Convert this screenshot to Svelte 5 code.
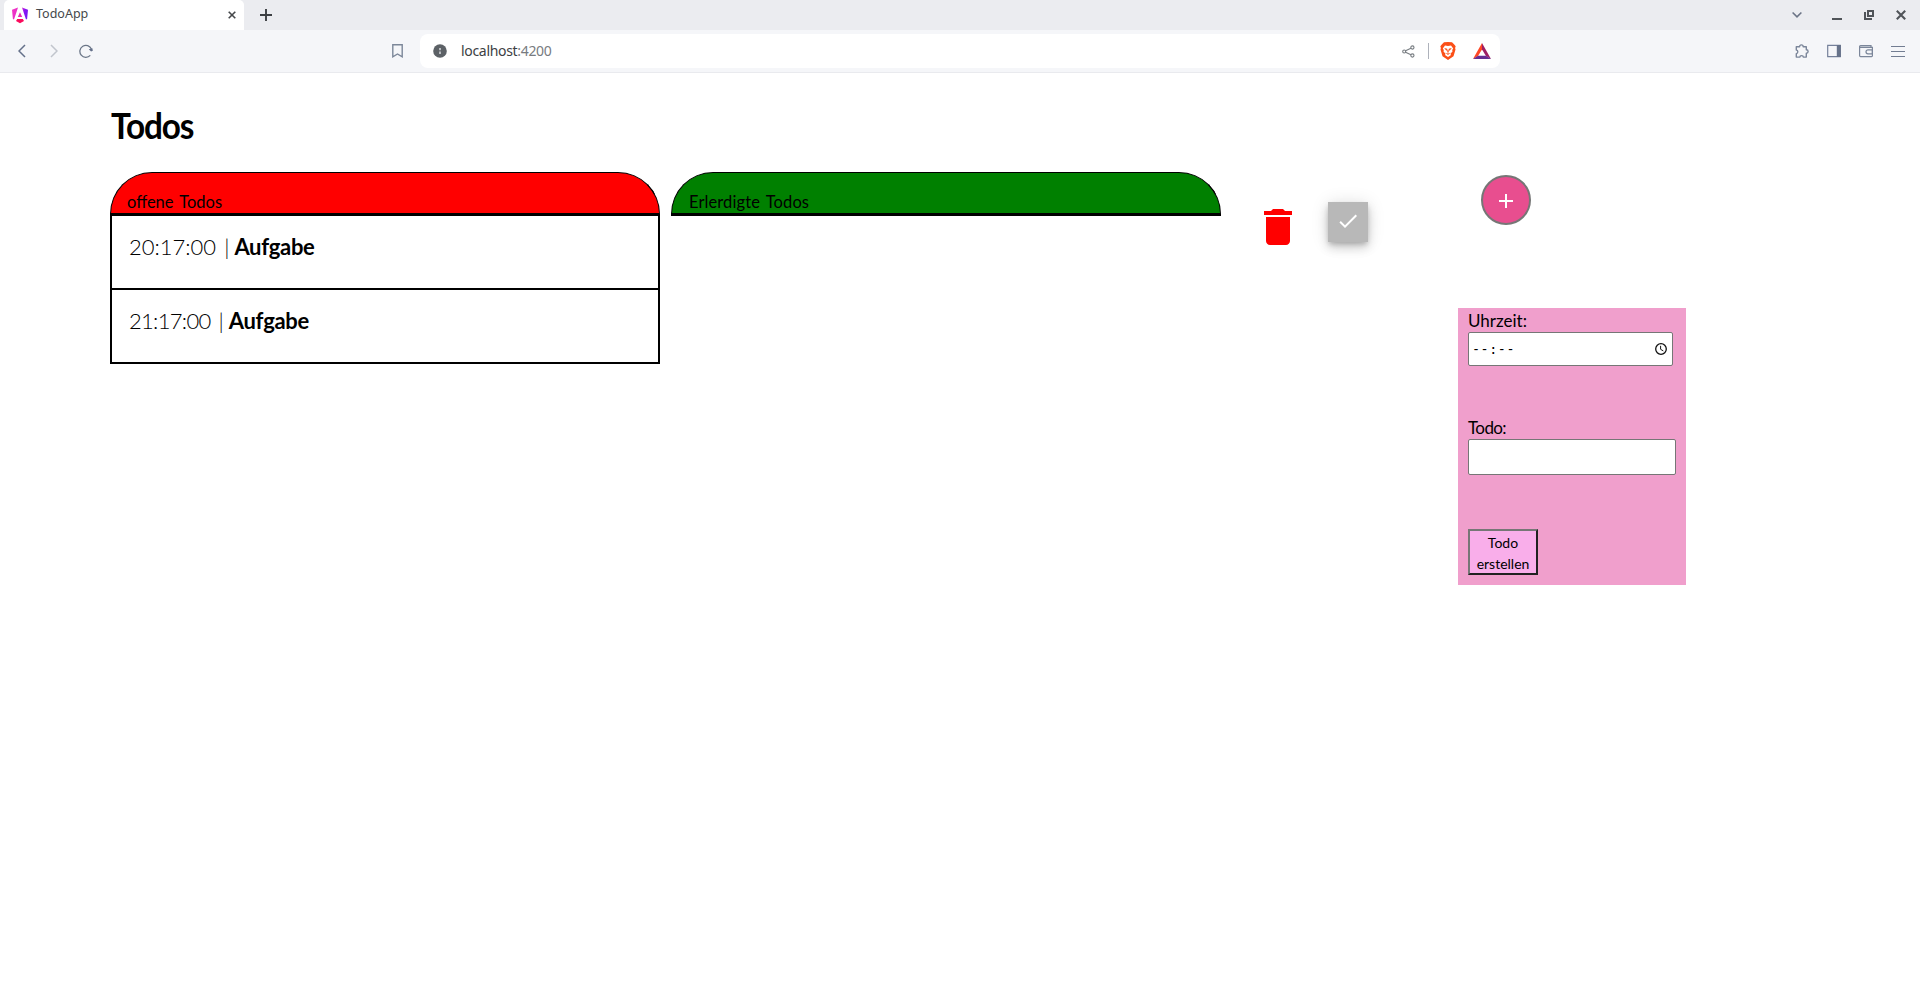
<script>
  const todos = [
    { time: '20:17:00', title: 'Aufgabe', tracking: 0 },
    { time: '21:17:00', title: 'Aufgabe', tracking: -0.7 }
  ];
</script>

<div class="browser">
  <div class="tabs">
    <div class="tab">
      <svg class="logo" width="16" height="17" viewBox="0 0 16 17">
        <defs>
          <linearGradient id="ng" x1="0" y1="0" x2="1" y2="0.3">
            <stop offset="0" stop-color="#f637c5" />
            <stop offset="0.55" stop-color="#e22cc8" />
            <stop offset="0.8" stop-color="#8a14f5" />
            <stop offset="1" stop-color="#7b17f3" />
          </linearGradient>
        </defs>
        <path d="M6 .5 0 2.8l.9 9.2 1.1.6zM10 .5l6 2.3-.9 9.2-1.1.6z" fill="url(#ng)" />
        <path d="M8 5.3 5.8 10h4.4z" fill="#e62bb2" />
        <path d="M5.2 12h5.6l1.2 2L8 16.3 4 14z" fill="#fb0b5c" />
      </svg>
      <span class="tab-title">TodoApp</span>
      <svg class="tab-close" width="8" height="8" viewBox="0 0 8 8"><path d="m.7.7 6.6 6.6M7.3.7.7 7.3" stroke="#45484b" stroke-width="1.6" /></svg>
    </div>
    <svg class="new-tab" width="12" height="12" viewBox="0 0 12 12"><path d="M6 0v12M0 6h12" stroke="#3c3f43" stroke-width="1.9" /></svg>
    <div class="window-buttons">
      <svg width="10" height="10" viewBox="0 0 10 10" fill="none" stroke="#6b7486" stroke-width="1.6"><path d="m.6 2.5 4.4 4.3 4.4-4.3" /></svg>
      <svg width="10" height="10" viewBox="0 0 10 10"><path d="M0 8h10v2H0z" fill="#505459" /></svg>
      <svg width="10" height="10" viewBox="0 0 10 10" fill="none" stroke="#505459" stroke-width="2"><path d="M4 1h5v5H4zM1 2v7h7" /></svg>
      <svg width="10" height="10" viewBox="0 0 10 10"><path d="m.8.8 8.4 8.4M9.2.8.8 9.2" stroke="#505459" stroke-width="2.1" /></svg>
    </div>
  </div>
  <div class="toolbar">
    <div class="nav">
      <svg width="8" height="14" viewBox="0 0 8 14" fill="none" stroke="#64708a" stroke-width="1.5"><path d="M7 1 1 7l6 6" /></svg>
      <svg width="8" height="14" viewBox="0 0 8 14" fill="none" stroke="#c1c5cd" stroke-width="1.5"><path d="m1 1 6 6-6 6" /></svg>
      <svg width="14" height="14" viewBox="0 0 14 14" fill="none" stroke="#6b7688" stroke-width="1.3"><path d="M11.3 11.4A6 6 0 1 1 12.4 5" /><path d="m9.8 5.2 3.6-1 .4 2.5-1.7.8z" fill="#64708a" stroke="none" /></svg>
    </div>
    <svg class="bookmark" width="11" height="14" viewBox="0 0 11 14" fill="none" stroke="#7c8799" stroke-width="1.4"><path d="M.8.8h9.4v12L5.5 10 .8 12.8z" /></svg>
    <div class="address">
      <svg width="14" height="14" viewBox="0 0 14 14"><circle cx="7" cy="7" r="6.8" fill="#5c6166" /><path d="M6 4h2v2.3H6zM6 7.5h2v2.4H6z" fill="#b9bcbf" /></svg>
      <span class="url">localhost<span>:4200</span></span>
      <div class="address-icons">
        <svg width="13" height="13" viewBox="0 0 13 13" fill="none" stroke="#777c81" stroke-width="1.1"><circle cx="2.2" cy="6.5" r="1.5" /><circle cx="10.4" cy="2.5" r="1.6" /><circle cx="10.4" cy="10.5" r="1.6" /><path d="m3.6 5.8 5.3-2.5M3.6 7.2l5.3 2.5" /></svg>
        <i></i>
        <svg width="16" height="18" viewBox="0 0 16 18"><path d="m4 .3 4-.2 4 .2 2 2 1.7 2-.6 1.6.4 1.7-2 6.6L8 17.9l-5.5-3.7-2-6.6.4-1.7-.6-1.6L2 2.3z" fill="#fb4f17" /><path d="m5 3.6 3 .5 3-.5 2.2 2.8-1 1.7.3 1.4-2.1 2.2L11 13l-3 2-3-2 .6-1.3-2.1-2.2.3-1.4-1-1.7z" fill="#fff" /><path d="m4.2 6 3 .8-.6 2.2zM11.8 6l-3 .8.6 2.2zM7.3 7.5h1.4v2.9H7.3zM5.5 10.8l2.5.8 2.5-.8L8 13.1z" fill="#fb4f17" /></svg>
        <svg class="bat" width="18" height="16" viewBox="0 0 18 16"><path d="M9 0 0 16l5-3 4-6.5z" fill="#ff4724" /><path d="m9 0 9 16-5-3-4-6.5z" fill="#9e1f63" /><path d="M0 16h18l-5-3.2H5z" fill="#662d91" /></svg>
      </div>
    </div>
    <div class="tools">
      <svg width="14" height="14" viewBox="0 0 14 14" fill="none" stroke="#7b869a" stroke-width="1.4" stroke-linejoin="round"><path d="M1.3 2.7h3.3c0-2.4 3.6-2.4 3.6 0h3.1v3.1c2.4 0 2.4 3.5 0 3.5v3.8H8.3c0-2-3.4-2-3.4 0H1.3V9.6c2 0 2-3.5 0-3.5z" /></svg>
      <svg width="14" height="14" viewBox="0 0 14 14"><path d="M.7 1.4h12.6v11.3H.7z" fill="none" stroke="#75809a" stroke-width="1.2" /><path d="M9.8 1H13.8v12H9.8z" fill="#66728a" /></svg>
      <svg width="14" height="14" viewBox="0 0 14 14" fill="none" stroke="#7b869a" stroke-width="1.2"><path d="M12 3V1.6H1.6q-1 0-1 1v9q0 1 1 1h11q.8 0 .8-.8V3.3H1" /><path d="M13.4 5.8H9a2 2 0 0 0 0 4h4.4z" /></svg>
      <svg width="14" height="14" viewBox="0 0 14 14" stroke="#727d92" stroke-width="1.2"><path d="M0 2.5h14M0 7.5h14M0 12.5h14" /></svg>
    </div>
  </div>
</div>

<main>
  <h1><span>Todos</span></h1>
  <div class="content">
    <section class="column">
      <header class="open"><span>offene Todos</span></header>
      <div class="list">
        {#each todos as todo}
          <div class="row"><span class="time" style="letter-spacing: {todo.tracking}px">{todo.time}</span><span class="bar">|</span><b>{todo.title}</b></div>
        {/each}
      </div>
    </section>
    <section class="column">
      <header class="done"><span>Erlerdigte Todos</span></header>
      <div class="list"></div>
    </section>
    <svg class="trash" width="48" height="48" viewBox="0 0 24 24" fill="red"><path d="M6 19c0 1.1.9 2 2 2h8c1.1 0 2-.9 2-2V7H6v12zM19 4h-3.5l-1-1h-5l-1 1H5v2h14V4z" /></svg>
    <button class="check" aria-label="Erledigt"><svg width="24" height="24" viewBox="0 0 24 24" fill="#fff"><path d="M9 16.17 4.83 12l-1.42 1.41L9 19 21 7l-1.41-1.41z" /></svg></button>
    <aside>
      <button class="add" aria-label="Hinzufügen"><svg width="24" height="24" viewBox="0 0 24 24" fill="#fff"><path d="M19 13h-6v6h-2v-6H5v-2h6V5h2v6h6v2z" /></svg></button>
      <div class="form">
        <div class="label uhr">Uhrzeit:</div>
        <div class="time-input">
          <span>--:--</span>
          <svg width="12" height="12" viewBox="0 0 12 12" fill="none" stroke="#111" stroke-width="1.3"><circle cx="6" cy="6" r="5.3" /><path d="M5.6 2.8v3.5l2.7 1.6" stroke-width="1" /></svg>
        </div>
        <div class="label todo">Todo:</div>
        <div class="text-input"></div>
        <button class="create"><span>Todo</span><span>erstellen</span></button>
      </div>
    </aside>
  </div>
</main>

<style>
  :global(body) { margin: 0; background: #fff; overflow: hidden; }
  svg { display: block; flex: none; }
  button { margin: 0; padding: 0; font: inherit; }
  .browser { font-family: "Noto Sans", "Open Sans", sans-serif; }
  .tabs { height: 30px; background: #ebecf0; display: flex; align-items: center; padding-left: 4px; }
  .tab { box-sizing: border-box; width: 240px; height: 30px; background: #fff; border-radius: 5px 5px 0 0; display: flex; align-items: center; padding: 0 8px; }
  .tab-title { margin-left: 8px; font-size: 12.5px; line-height: 28px; color: #45484b; flex: 1; height: 30px; }
  .new-tab { margin-left: 16px; }
  .window-buttons { margin-left: auto; display: flex; padding-right: 14px; gap: 22px; }
  .window-buttons svg:first-child { margin-right: 8px; }
  .toolbar { height: 42px; background: #f5f6f9; border-bottom: 1px solid #e9eaee; display: flex; align-items: center; }
  .nav { display: flex; align-items: center; gap: 24px; width: 374px; padding-left: 18px; }
  .nav svg:last-child { margin-left: -3px; }
  .bookmark { margin-left: 0; }
  .address { margin-left: 17px; box-sizing: border-box; width: 1080px; height: 34px; background: #fff; border-radius: 8px; display: flex; align-items: center; padding: 0 14px 0 13px; }
  .url { margin-left: 14px; font-size: 14px; line-height: 34px; color: #3c4043; letter-spacing: -0.32px; }
  .url span { color: #777b80; }
  .address-icons { margin-left: auto; display: flex; align-items: center; }
  .address-icons i { width: 1px; height: 16px; background: #aeb2bb; margin: 0 11px 0 13px; }
  .bat { margin-left: 17px; margin-right: -5px; }
  .tools { margin-left: auto; display: flex; gap: 18px; padding-right: 15px; }

  main { font-family: Lato, "Open Sans", sans-serif; color: #000; padding: 0 0 0 110px; }
  h1 { margin: 0; padding: 27px 0 0 1px; height: 72px; font-size: 37px; line-height: 50px; font-weight: 700; letter-spacing: -1.2px; }
  h1 span { display: inline-block; transform: scaleX(0.9); transform-origin: left; }
  .content { display: flex; align-items: flex-start; }
  .column { width: 550px; margin-right: 11px; }
  header { box-sizing: border-box; height: 42px; border: 1px solid #000; border-radius: 42px 42px 0 0; padding: 19px 17px 0 16px; font-size: 16.5px; line-height: 20px; }
  header span { display: block; }
  .open { background: red; }
  .open span { word-spacing: 2px; }
  .done { background: green; padding-left: 17px; }
  .done span { letter-spacing: 0.1px; word-spacing: 2px; }
  .list { border-top: 2px solid #000; }
  .row { box-sizing: border-box; height: 74px; border: solid #000; border-width: 0 2px 2px; padding: 17px 0 0 17px; font-size: 22px; line-height: 28px; display: flex; }
  .row b { letter-spacing: -0.3px; }
  .time { font-weight: 300; }
  .bar { margin: 0 5px 0 8px; font-weight: 300; }
  .trash { margin: 31px 0 0 22px; }
  .check { margin: 30px 0 0 26px; width: 40px; height: 40px; border: 0; background: #b8b8b8; display: flex; justify-content: center; padding-top: 7px; box-shadow: 0 3px 5px -1px rgba(0,0,0,.2), 0 6px 10px rgba(0,0,0,.14), 0 1px 18px rgba(0,0,0,.12); }
  aside { margin-left: 90px; }
  .add { display: flex; justify-content: center; box-sizing: border-box; width: 50px; height: 50px; margin: 3px 0 83px 23px; border: 2px solid #767676; border-radius: 50%; background: #e84e8f; padding-top: 12px; }
  .form { box-sizing: border-box; width: 228px; height: 277px; background: #f09fcc; padding: 2px 10px 10px; display: flex; flex-direction: column; align-items: flex-start; }
  .label { font-size: 17px; line-height: 21px; padding-bottom: 1px; }
  .time-input { box-sizing: border-box; width: 205px; height: 34px; border: 1px solid #767676; border-radius: 2px; background: #fff; display: flex; align-items: center; justify-content: space-between; padding: 0 5px 0 3px; font: 13.33px "DejaVu Sans Mono", monospace; letter-spacing: 0.6px; }
  .label.todo { margin-top: 51px; letter-spacing: -0.6px; }
  .text-input { box-sizing: border-box; width: 208px; height: 36px; border: 1px solid #767676; border-radius: 2px; background: #fff; }
  .create { box-sizing: border-box; width: 70px; height: 46px; margin-top: 54px; padding-top: 2px; border: 2px solid; border-color: #767676 #212121 #212121 #767676; background: #f9aeea; font-size: 14px; line-height: 21px; display: flex; flex-direction: column; align-items: center; justify-content: center; color: #000; }
</style>
